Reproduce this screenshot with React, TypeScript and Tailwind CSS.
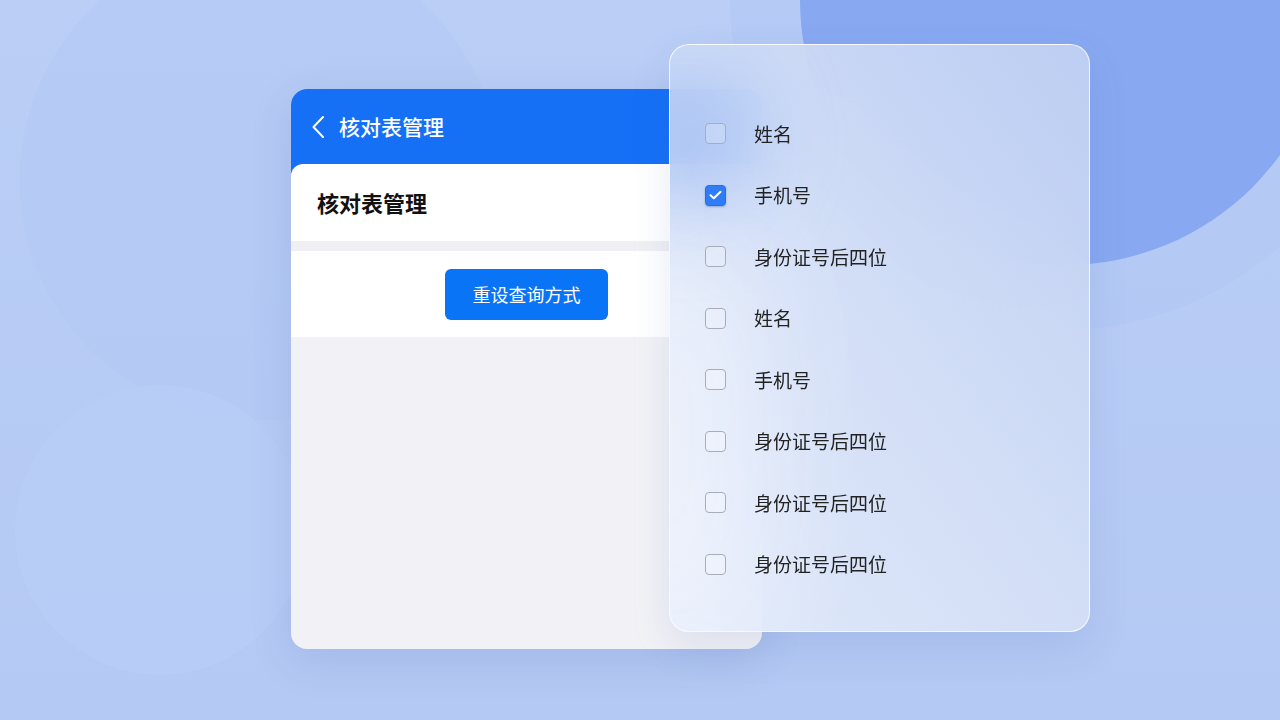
const options = [
  { label: "姓名", checked: false },
  { label: "手机号", checked: true },
  { label: "身份证号后四位", checked: false },
  { label: "姓名", checked: false },
  { label: "手机号", checked: false },
  { label: "身份证号后四位", checked: false },
  { label: "身份证号后四位", checked: false },
  { label: "身份证号后四位", checked: false },
];

function Checkbox({ checked }: { checked: boolean }) {
  if (checked) {
    return (
      <div className="flex h-[21px] w-[21px] items-center justify-center rounded-[4px] border border-[#2a6fe0] bg-[#2f7df6] shadow-[0_1px_2px_rgba(30,60,120,0.35)]">
        <svg width="13" height="10" viewBox="0 0 13 10" fill="none">
          <path d="M1.5 5.2 L4.8 8.2 L11.5 1.8" stroke="white" strokeWidth="2" strokeLinecap="round" strokeLinejoin="round" />
        </svg>
      </div>
    );
  }
  return <div className="h-[21px] w-[21px] rounded-[4px] border-[1.5px] border-[#a7adba] bg-white/20" />;
}

export default function App() {
  return (
    <div
      className="relative h-[720px] w-[1280px] overflow-hidden bg-gradient-to-b from-[#bacef6] to-[#b4c9f3]"
      style={{ fontFamily: '"Noto Sans CJK SC", "Noto Sans", sans-serif' }}
    >
      {/* background blobs */}
      <div className="absolute left-[20px] top-[-60px] h-[480px] w-[480px] rounded-full bg-[#b2c8f4]/50" />
      <div className="absolute left-[15px] top-[385px] h-[290px] w-[290px] rounded-full bg-[#b8cdf6]/80" />
      <div className="absolute left-[730px] top-[-330px] h-[660px] w-[660px] rounded-full bg-[#a9c1f2]/25" />
      <div className="absolute left-[800px] top-[-265px] h-[530px] w-[530px] rounded-full bg-[#88a9f1]" />

      <div className="relative pl-[291px] pt-[89px]">
        <div className="relative w-[471px]">
          {/* phone card */}
          <div className="flex h-[560px] flex-col overflow-hidden rounded-[16px] bg-[#f2f2f6] shadow-[0_12px_40px_rgba(60,90,170,0.15)]">
            <div className="bg-[#1570f6]">
              <div className="flex h-[75px] items-center gap-[14px] pl-[20px]">
                <svg width="14" height="24" viewBox="0 0 14 24" fill="none">
                  <path d="M12 2 L2.5 12 L12 22" stroke="white" strokeWidth="2" strokeLinecap="round" strokeLinejoin="round" />
                </svg>
                <span className="text-[21px] font-medium text-white">核对表管理</span>
              </div>
              <div className="flex h-[77px] items-center rounded-t-[12px] bg-white pl-[26px]">
                <span className="text-[22px] font-bold text-[#111]">核对表管理</span>
              </div>
            </div>
            <div className="h-[10px] bg-[#f0f0f4]" />
            <div className="flex h-[86px] items-center justify-center bg-white">
              <button className="h-[51px] w-[163px] rounded-[6px] bg-[#0a74f6] text-[18px] text-white">
                重设查询方式
              </button>
            </div>
            <div className="flex-1" />
          </div>

          {/* glass panel */}
          <div className="absolute left-[378px] top-[-45px] h-[588px] w-[421px] overflow-hidden rounded-[20px] border border-white/80 bg-gradient-to-bl from-[#c3d2f3]/90 via-[#d6e1f7]/90 to-[#e6edfb]/90 shadow-[0_16px_40px_rgba(60,90,170,0.12)] backdrop-blur-3xl">
            <div className="absolute left-[-60px] top-[20px] h-[150px] w-[150px] rounded-full bg-[#9ab8f2]/60 blur-2xl" />
            <div className="absolute left-[-80px] top-[200px] h-[400px] w-[160px] rounded-full bg-white/40 blur-3xl" />
            <div className="relative pl-[35px] pt-[58px]">
              {options.map((o, i) => (
                <div key={i} className="flex h-[61.5px] items-center gap-[28px]">
                  <Checkbox checked={o.checked} />
                  <span className="text-[19px] text-[#222]">{o.label}</span>
                </div>
              ))}
            </div>
          </div>
        </div>
      </div>
    </div>
  );
}
